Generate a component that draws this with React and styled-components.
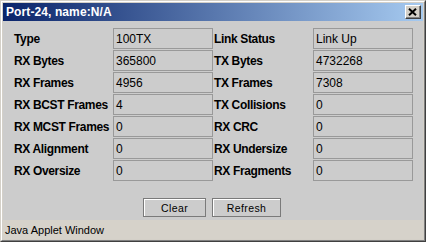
import React from "react";
import styled, { createGlobalStyle } from "styled-components";

const GlobalStyle = createGlobalStyle`
  html, body { margin: 0; padding: 0; background: #d4d0c8; }
  body { font-family: "Liberation Sans", Arial, sans-serif; }
`;

const Window = styled.div`
  width: 426px;
  height: 242px;
  box-sizing: border-box;
  border: 1px solid;
  border-color: #d4d0c8 #404040 #404040 #d4d0c8;
  display: flex;
`;

const Frame = styled.div`
  flex: 1;
  display: flex;
  flex-direction: column;
  border: 1px solid;
  border-color: #ffffff #808080 #808080 #ffffff;
  padding: 1px;
  background: #d4d0c8;
`;

const TitleBar = styled.div`
  height: 18px;
  flex: none;
  display: flex;
  align-items: center;
  justify-content: space-between;
  padding: 0 2px 0 3px;
  background: linear-gradient(to right, #0a246a, #a6caf0);
`;

const Title = styled.span`
  color: #ffffff;
  font-weight: bold;
  font-size: 12px;
  letter-spacing: 0.1px;
`;

const CloseButton = styled.div`
  width: 16px;
  height: 14px;
  box-sizing: border-box;
  background: #d4d0c8;
  border: 1px solid;
  border-color: #ffffff #404040 #404040 #ffffff;
  box-shadow: inset -1px -1px 0 #808080;
  display: flex;
  align-items: center;
  justify-content: center;
  padding: 0 1px 1px 0;
`;

const Content = styled.div`
  flex: 1;
  background: #cccccc;
  padding: 7px 10px 0 10px;
  display: flex;
  flex-direction: column;
`;

const Grid = styled.div`
  display: grid;
  grid-template-columns: repeat(4, 100px);
  grid-auto-rows: 22px;
`;

const Label = styled.div`
  font-weight: bold;
  font-size: 12px;
  letter-spacing: -0.35px;
  color: #000;
  height: 21px;
  line-height: 22px;
  white-space: nowrap;
  padding-left: 1px;
`;

const Field = styled.div`
  height: 21px;
  box-sizing: border-box;
  border: 1px solid #999999;
  font-size: 12px;
  color: #000;
  line-height: 20px;
  padding-left: 2px;
  white-space: nowrap;
`;

const ButtonRow = styled.div`
  display: flex;
  justify-content: center;
  gap: 6px;
  margin-top: 16px;
  padding-right: 2px;
`;

const Button = styled.div`
  width: ${(p) => p.$w}px;
  height: 19px;
  box-sizing: border-box;
  border: 1px solid #7a7a7a;
  box-shadow: inset 1px 1px 0 #ffffff;
  background: #cccccc;
  font-size: 10.5px;
  letter-spacing: 0.4px;
  color: #000;
  display: flex;
  align-items: center;
  justify-content: center;
`;

const StatusBar = styled.div`
  height: 19px;
  flex: none;
  background: #d6d2ca;
  font-size: 11px;
  color: #000;
  display: flex;
  align-items: center;
  padding-left: 2px;
`;

const rows = [
  ["Type", "100TX", "Link Status", "Link Up"],
  ["RX Bytes", "365800", "TX Bytes", "4732268"],
  ["RX Frames", "4956", "TX Frames", "7308"],
  ["RX BCST Frames", "4", "TX Collisions", "0"],
  ["RX MCST Frames", "0", "RX CRC", "0"],
  ["RX Alignment", "0", "RX Undersize", "0"],
  ["RX Oversize", "0", "RX Fragments", "0"],
];

export default function App() {
  return (
    <>
      <GlobalStyle />
      <Window>
        <Frame>
          <TitleBar>
            <Title>Port-24, name:N/A</Title>
            <CloseButton>
              <svg width="9" height="8" viewBox="0 0 9 8">
                <path d="M1 0.8 L8 7.2 M8 0.8 L1 7.2" stroke="#000" strokeWidth="2" fill="none" />
              </svg>
            </CloseButton>
          </TitleBar>
          <Content>
            <Grid>
              {rows.map((r) => (
                <React.Fragment key={r[0]}>
                  <Label>{r[0]}</Label>
                  <Field>{r[1]}</Field>
                  <Label>{r[2]}</Label>
                  <Field>{r[3]}</Field>
                </React.Fragment>
              ))}
            </Grid>
            <ButtonRow>
              <Button $w={63}>Clear</Button>
              <Button $w={69}>Refresh</Button>
            </ButtonRow>
          </Content>
          <StatusBar>Java Applet Window</StatusBar>
        </Frame>
      </Window>
    </>
  );
}
